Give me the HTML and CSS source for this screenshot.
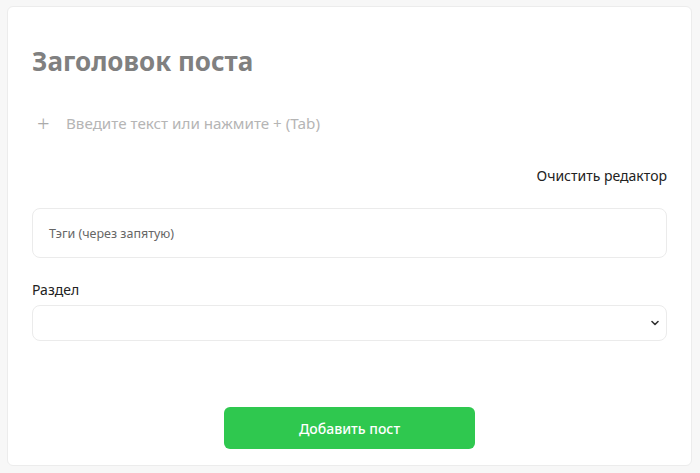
FILE: index.html
```html
<!DOCTYPE html>
<html lang="ru">
<head>
<meta charset="utf-8">
<link rel="stylesheet" href="styles.css">
</head>
<body>
<div class="card">
  <h1 class="title">Заголовок поста</h1>
  <div class="editor-line">
    <span class="plus">+</span>
    <span class="placeholder">Введите текст или нажмите + (Tab)</span>
  </div>
  <div class="clear-row"><span class="clear">Очистить редактор</span></div>
  <div class="input tags">Тэги (через запятую)</div>
  <div class="label">Раздел</div>
  <div class="input select">
    <svg class="chevron" width="8" height="6" viewBox="0 0 8 6"><path d="M1 1.5 L4 4.5 L7 1.5" fill="none" stroke="#333" stroke-width="1.6" stroke-linecap="round" stroke-linejoin="round"/></svg>
  </div>
  <div class="btn-row"><button class="btn">Добавить пост</button></div>
</div>
</body>
</html>
```
FILE: styles.css
```css
html, body { margin: 0; padding: 0; }
body {
  background: #f7f7f7;
  font-family: "Noto Sans", "Open Sans", sans-serif;
  width: 700px;
  height: 473px;
  overflow: hidden;
}
.card {
  margin: 6px 8px 0 7px;
  height: 460px;
  box-sizing: border-box;
  background: #fff;
  border: 1px solid #ececec;
  border-radius: 6px;
  padding: 0 24px 0 24px;
  display: flex;
  flex-direction: column;
}
.title {
  margin: 36px 0 0 0;
  font-size: 26px;
  line-height: 36px;
  font-weight: 700;
  color: #808080;
}
.editor-line {
  margin-top: 32px;
  display: flex;
  align-items: center;
  height: 24px;
}
.plus {
  font-size: 22px;
  font-weight: 300;
  color: #aaa;
  width: 34px;
  padding-left: 5px;
  box-sizing: border-box;
  line-height: 24px;
}
.placeholder {
  font-size: 15.2px;
  color: #b5b5b5;
}
.clear-row {
  margin-top: 31px;
  display: flex;
  justify-content: flex-end;
}
.clear {
  font-size: 14px;
  color: #222;
  line-height: 20px;
}
.input {
  box-sizing: border-box;
  border: 1px solid #ebebeb;
  border-radius: 8px;
  background: #fff;
}
.tags {
  margin-top: 22px;
  height: 50px;
  padding: 0 16px;
  display: flex;
  align-items: center;
  font-size: 12.5px;
  color: #666;
}
.label {
  margin-top: 22px;
  font-size: 14px;
  line-height: 20px;
  color: #222;
}
.select {
  margin-top: 5px;
  height: 36px;
  display: flex;
  align-items: center;
  justify-content: flex-end;
  padding-right: 7px;
}
.btn-row {
  margin-top: 66px;
  display: flex;
  justify-content: center;
}
.btn {
  width: 251px;
  height: 42px;
  border: none;
  border-radius: 6px;
  background: #2fc84f;
  color: #fff;
  font-family: "Noto Sans", "Open Sans", sans-serif;
  font-size: 14px;
  font-weight: 500;
}
```
